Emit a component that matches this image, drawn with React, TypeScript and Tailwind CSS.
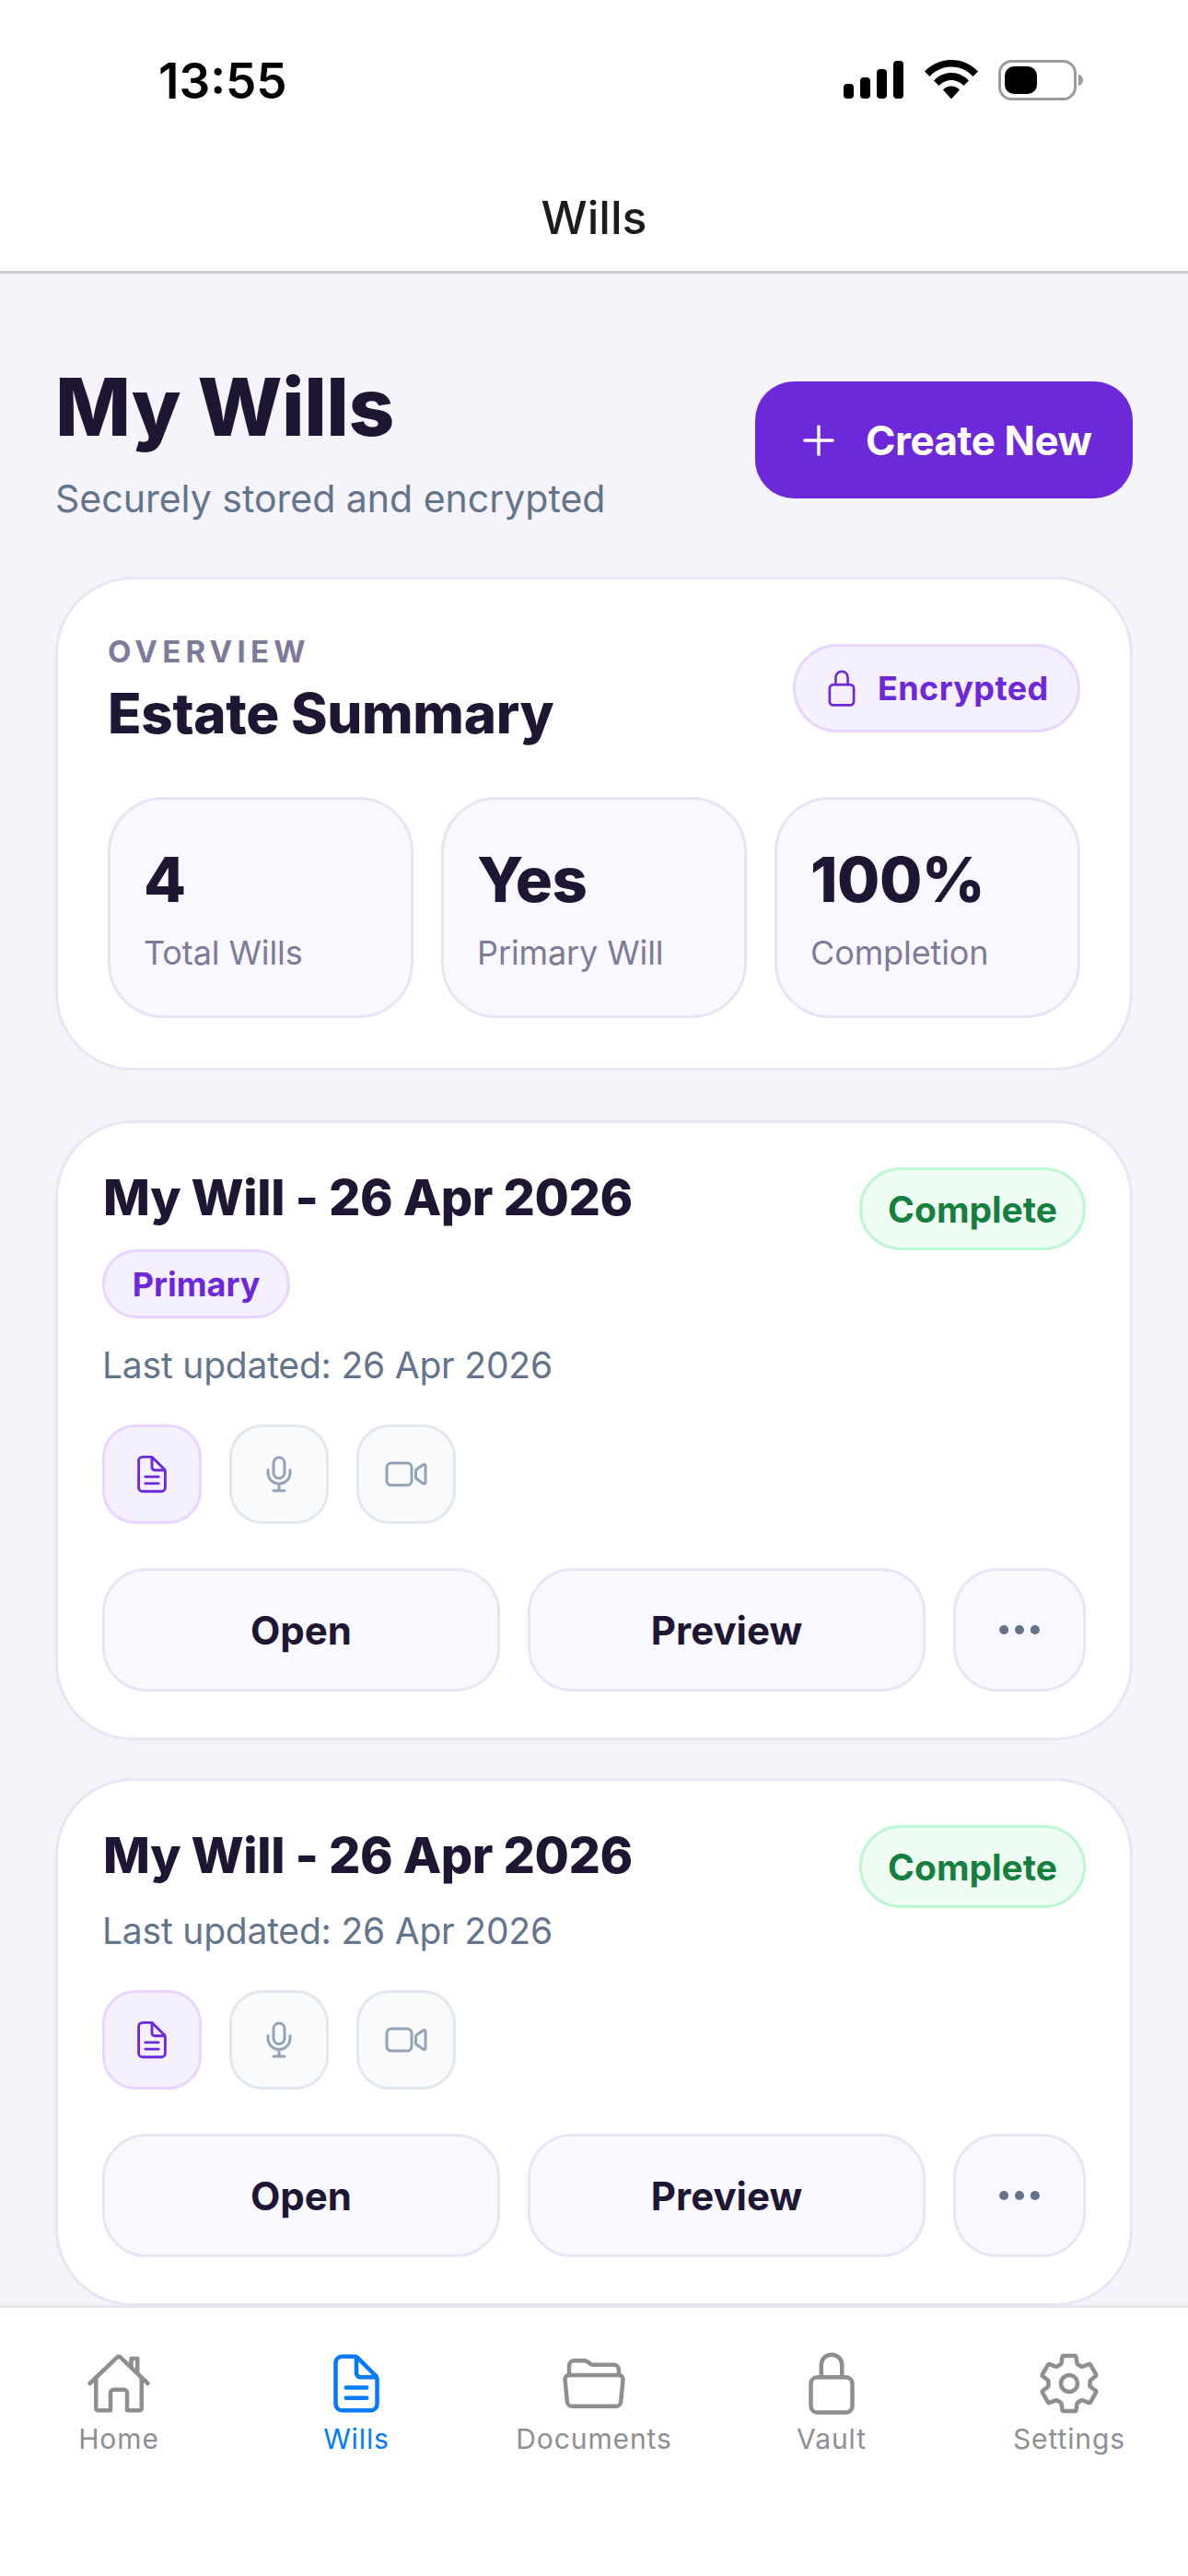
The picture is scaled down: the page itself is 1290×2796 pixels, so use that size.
import React from "react";
import {
  IoAddOutline,
  IoDocumentTextOutline,
  IoEllipsisHorizontal,
  IoFolderOpenOutline,
  IoHomeOutline,
  IoLockClosedOutline,
  IoMicOutline,
  IoSettingsOutline,
  IoVideocamOutline,
} from "react-icons/io5";

function StatusIcons() {
  return (
    <div className="flex items-start pt-[65px] gap-[22px]">
      <svg width="66" height="42" viewBox="0 0 66 42" className="mt-[1px]">
        <rect x="0" y="25" width="11" height="16" rx="4" fill="#000" />
        <rect x="18" y="18" width="11" height="23" rx="4" fill="#000" />
        <rect x="36" y="9" width="11" height="32" rx="4" fill="#000" />
        <rect x="54" y="0" width="11" height="41" rx="4" fill="#000" />
      </svg>
      <svg width="58" height="43" viewBox="0 0 58 43">
        <path d="M0 12.500C7.500 4.500 18 0 29 0s21.500 4.500 29 12.500L52.500 18C46.500 11.500 38 7.500 29 7.500S11.500 11.500 5.500 18z" fill="#000" />
        <path d="M10 22.500C15 17 22 14 29 14s14 3 19 8.500L42.500 28C39 24.500 34 22 29 22s-10 2.500-13.500 6z" fill="#000" />
        <path d="M20 32.500C22.500 30 25.500 28.500 29 28.500s6.500 1.500 9 4L29 42.500z" fill="#000" />
      </svg>
      <svg width="93" height="44" viewBox="0 0 93 44">
        <rect x="1.500" y="1.500" width="82" height="41" rx="13" fill="none" stroke="#9b9b9b" strokeWidth="3" />
        <rect x="7" y="7" width="35" height="30" rx="10" fill="#000" />
        <path d="M87 16c3 .5 5 3 5 6s-2 5.500-5 6z" fill="#9b9b9b" />
      </svg>
    </div>
  );
}

function Stat({ value, label }: { value: string; label: string }) {
  return (
    <div className="h-[240px] rounded-[60px] border-[3px] border-[#e8e4f6] bg-[#f9f8ff] px-[36px] pt-[47px]">
      <div className="text-[67px] leading-[80px] font-extrabold tracking-[-0.5px] text-[#1e1633]">{value}</div>
      <div className="mt-[15px] text-[36px] leading-[48px] tracking-[-0.1px] text-[#7f7a99]">{label}</div>
    </div>
  );
}

function Tile({ tone, children }: { tone: "purple" | "gray"; children: React.ReactNode }) {
  return (
    <div
      className={
        tone === "purple"
          ? "flex h-[108px] w-[108px] items-center justify-center rounded-[36px] border-[3px] border-[#e9d5ff] bg-[#f5f0ff] text-[#6d28d9]"
          : "flex h-[108px] w-[108px] items-center justify-center rounded-[36px] border-[3px] border-[#e2e8f0] bg-[#f8fafc] text-[#94a3b8]"
      }
    >
      {children}
    </div>
  );
}

function ActionButton({ label }: { label: string }) {
  return (
    <div className="flex h-[134px] flex-1 items-center justify-center rounded-[48px] border-[3px] border-[#e9e4f6] bg-[#f9f8ff] text-[42px] font-bold text-[#1e1633]">
      {label}
    </div>
  );
}

function WillCard({ primary }: { primary?: boolean }) {
  return (
    <div className="rounded-[84px] border-[3px] border-[#e9e5f6] bg-white px-[48px] pt-[48px] pb-[50px]">
      <div className="relative">
        <div className="pl-[1px] text-[54px] leading-[66px] font-extrabold tracking-[-0.4px] text-[#1e1633]">My Will - 26 Apr 2026</div>
        <div className="absolute right-0 top-0 flex h-[90px] items-center rounded-full border-[3px] border-[#bbf7d0] bg-[#effcf4] px-[28px] pt-[2px] text-[39px] font-bold text-[#15803d]">
          Complete
        </div>
        {primary && (
          <div className="mt-[23px] flex h-[75px] w-[204px] items-center justify-center rounded-full border-[3px] border-[#e9d5ff] bg-[#f5f0ff] text-[36px] font-bold text-[#6d28d9]">
            Primary
          </div>
        )}
        <div className={primary ? "mt-[25px] text-[39px] leading-[52px] tracking-[-0.2px] text-[#64748b]" : "mt-[23px] text-[39px] leading-[52px] tracking-[-0.2px] text-[#64748b]"}>
          Last updated: 26 Apr 2026
        </div>
      </div>
      <div className="mt-[38px] flex gap-[30px]">
        <Tile tone="purple">
          <IoDocumentTextOutline size={46} />
        </Tile>
        <Tile tone="gray">
          <IoMicOutline size={48} />
        </Tile>
        <Tile tone="gray">
          <IoVideocamOutline size={48} />
        </Tile>
      </div>
      <div className="mt-[48px] flex gap-[30px]">
        <ActionButton label="Open" />
        <ActionButton label="Preview" />
        <div className="flex h-[134px] w-[144px] items-center justify-center rounded-[48px] border-[3px] border-[#e9e4f6] bg-[#f9f8ff] text-[#64748b]">
          <IoEllipsisHorizontal size={54} />
        </div>
      </div>
    </div>
  );
}

function NavItem({ label, active, children }: { label: string; active?: boolean; children: React.ReactNode }) {
  return (
    <div className={active ? "flex flex-1 flex-col items-center text-[#007aff]" : "flex flex-1 flex-col items-center text-[#8e8e93]"}>
      <div className="flex h-[72px] w-[72px] items-center justify-center">{children}</div>
      <div className="mt-[4px] text-[30px] leading-[40px] tracking-[0.9px]">{label}</div>
    </div>
  );
}

export default function App() {
  return (
    <div className="flex h-[2796px] w-[1290px] flex-col overflow-hidden bg-[#f4f4fa] font-['Inter','Noto_Sans',sans-serif]">
      <header className="h-[297px] shrink-0 border-b-[3px] border-[#cfcfd6] bg-white">
        <div className="flex h-[204px] justify-between pl-[172px] pr-[113px]">
          <div className="pt-[56px] text-[53px] leading-[64px] font-semibold text-black">13:55</div>
          <StatusIcons />
        </div>
        <div className="text-center text-[50px] leading-[64px] font-medium text-[#1c1c1e]">Wills</div>
      </header>

      <main className="flex-1 overflow-hidden px-[60px] pt-[97px]">
        <div className="flex items-start justify-between">
          <div>
            <h1 className="text-[87px] leading-[96px] font-extrabold tracking-[-0.5px] text-[#1e1633]">My Wills</h1>
            <p className="mt-[24px] text-[41px] leading-[54px] text-[#64748b]">Securely stored and encrypted</p>
          </div>
          <div className="mt-[20px] flex h-[127px] w-[410px] items-center gap-[24px] rounded-[42px] bg-[#6d28d9] pl-[42px] text-[44px] font-bold tracking-[-0.5px] text-white">
            <IoAddOutline size={54} />
            Create New
          </div>
        </div>

        <section className="mt-[58px] rounded-[84px] border-[3px] border-[#e9e5f6] bg-white p-[54px]">
          <div className="flex h-[128px] items-center justify-between">
            <div>
              <div className="pt-[3px] text-[33px] leading-[44px] font-bold tracking-[5.200px] text-[#7f7a99]">OVERVIEW</div>
              <div className="mt-[7px] text-[60px] leading-[76px] font-extrabold tracking-[-0.3px] text-[#1e1633]">Estate Summary</div>
            </div>
            <div className="flex h-[96px] w-[312px] items-center gap-[18px] rounded-full border-[3px] border-[#e9d5ff] bg-[#f5f0ff] pl-[29px] text-[36px] font-bold tracking-[0.4px] text-[#6d28d9]">
              <IoLockClosedOutline size={42} />
              Encrypted
            </div>
          </div>
          <div className="mt-[54px] grid grid-cols-3 gap-[30px]">
            <Stat value="4" label="Total Wills" />
            <Stat value="Yes" label="Primary Will" />
            <Stat value="100%" label="Completion" />
          </div>
        </section>

        <div className="mt-[54px] flex flex-col gap-[41px]">
          <WillCard primary />
          <WillCard />
        </div>
      </main>

      <nav className="flex h-[294px] shrink-0 items-start border-t-[3px] border-[#e2e8f0] bg-white pt-[46px]">
        <NavItem label="Home">
          <IoHomeOutline size={72} />
        </NavItem>
        <NavItem label="Wills" active>
          <IoDocumentTextOutline size={72} />
        </NavItem>
        <NavItem label="Documents">
          <IoFolderOpenOutline size={72} />
        </NavItem>
        <NavItem label="Vault">
          <IoLockClosedOutline size={72} />
        </NavItem>
        <NavItem label="Settings">
          <IoSettingsOutline size={72} />
        </NavItem>
      </nav>
    </div>
  );
}
